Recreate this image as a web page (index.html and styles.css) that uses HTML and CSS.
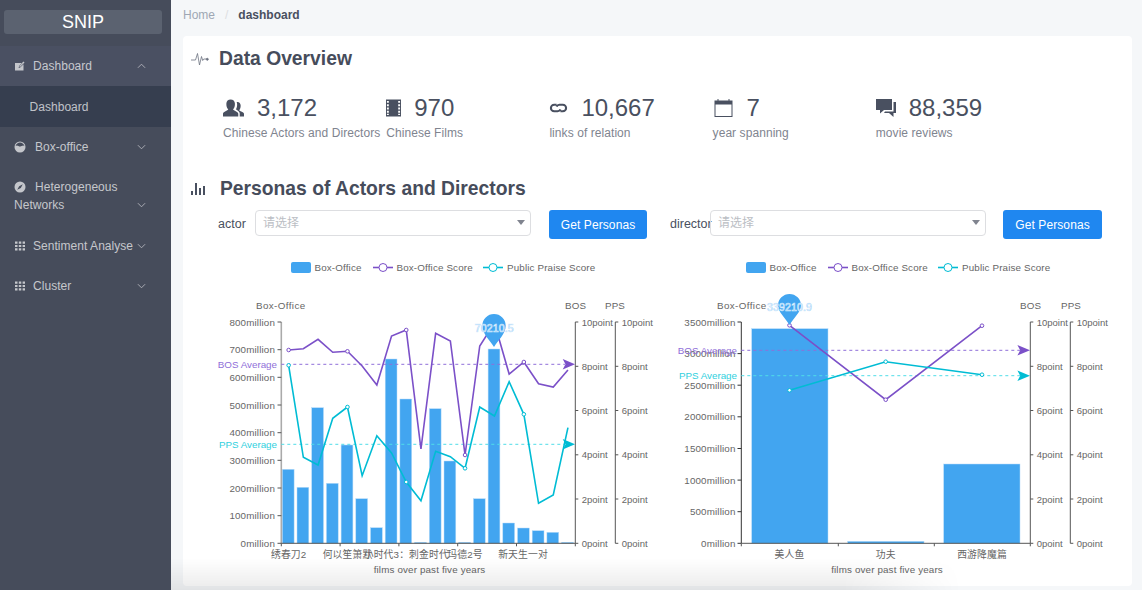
FILE: index.html
```html
<!DOCTYPE html>
<html lang="en">
<head>
    <meta charset="UTF-8">
    <meta name="viewport" content="width=device-width, initial-scale=1.0">
    <title>SNIP</title>
    <link rel="stylesheet" href="styles.css">
</head>
<body>
    <aside class="sidebar">
        <div class="logo">SNIP</div>
        <ul class="menu">
            <li class="menu-item open">
                <span class="menu-text"><svg class="menu-icon" viewBox="0 0 12 12"><path d="M1 3h7.500L5 6.500 4.600 8l1.600-.4L9.500 4.300V10.500H1zM6 7l4.500-4.500-1-1L5.200 5.800z"/></svg>Dashboard</span>
                <svg class="chevron" viewBox="0 0 10 6"><path d="M1 5l4-4 4 4"/></svg>
            </li>
            <li class="submenu-item">Dashboard</li>
            <li class="menu-item">
                <span class="menu-text text-wide"><svg class="menu-icon" viewBox="0 0 12 12"><circle cx="6" cy="6" r="5.500"/><path class="icon-cut" d="M1.500 5.200C3 3.300 4.500 5.300 6 5.500S9 3.500 10.500 5.200C9.800 2.800 8 1.500 6 1.500S2.200 2.800 1.500 5.200z"/></svg>Box-office</span>
                <svg class="chevron" viewBox="0 0 10 6"><path d="M1 1l4 4 4-4"/></svg>
            </li>
            <li class="menu-item tall">
                <span class="menu-text text-wide"><svg class="menu-icon" viewBox="0 0 12 12"><circle cx="6" cy="6" r="5.500"/><path class="icon-cut" d="M8.800 3.200L6.800 7 3.200 8.800 5.200 5.200z"/></svg>Heterogeneous Networks</span>
                <svg class="chevron" viewBox="0 0 10 6"><path d="M1 1l4 4 4-4"/></svg>
            </li>
            <li class="menu-item">
                <span class="menu-text"><svg class="menu-icon" viewBox="0 0 12 12"><path d="M1 1.500h2.500v2.200H1zM4.800 1.500h2.500v2.200H4.800zM8.600 1.500H11v2.200H8.600zM1 4.900h2.500v2.200H1zM4.800 4.900h2.500v2.200H4.800zM8.600 4.900H11v2.200H8.600zM1 8.300h2.500v2.200H1zM4.800 8.300h2.500v2.200H4.800zM8.600 8.300H11v2.200H8.600z"/></svg>Sentiment Analyse</span>
                <svg class="chevron" viewBox="0 0 10 6"><path d="M1 1l4 4 4-4"/></svg>
            </li>
            <li class="menu-item">
                <span class="menu-text"><svg class="menu-icon" viewBox="0 0 12 12"><path d="M1 1.500h2.500v2.200H1zM4.800 1.500h2.500v2.200H4.800zM8.600 1.500H11v2.200H8.600zM1 4.900h2.500v2.200H1zM4.800 4.900h2.500v2.200H4.800zM8.600 4.900H11v2.200H8.600zM1 8.300h2.500v2.200H1zM4.800 8.300h2.500v2.200H4.800zM8.600 8.300H11v2.200H8.600z"/></svg>Cluster</span>
                <svg class="chevron" viewBox="0 0 10 6"><path d="M1 1l4 4 4-4"/></svg>
            </li>
        </ul>
    </aside>

    <main class="content">
        <nav class="breadcrumb">
            <span>Home</span>
            <span class="crumb-sep">/</span>
            <strong>dashboard</strong>
        </nav>

        <section class="card">
            <h2 class="section-title">
                <svg class="title-icon" viewBox="0 0 18 14"><path d="M0 8h4.500L6.500 1.500 8.500 13l2-8.500L11.700 8.500l1-1.500h3"/><circle cx="16.300" cy="7.300" r="1"/></svg>
                Data Overview
            </h2>

            <div class="stats">
                <div class="stat">
                    <div class="stat-top">
                        <svg class="stat-icon" viewBox="0 0 22 18"><path d="M0 18v-3c0-2 4-3 5.500-4.500C4 9 3.500 7 3.500 4.500 3.500 1.500 5.500 0 8 0s4.500 1.500 4.500 4.500c0 2.500-.5 4.500-2 6C12 12 16 13 16 15v3zM17.500 18v-3.500c0-1.500-2-3-4-4.200 1-1.500 1.300-3.300 1.300-5.300 0-1-.2-1.700-.5-2.300C16.700 2.200 18.500 3.800 18.500 6.500c0 2-.5 3.700-1.500 5 1.500 1 5 1.800 5 3.500v3z"/></svg>
                        <span class="stat-value">3,172</span>
                    </div>
                    <div class="stat-label">Chinese Actors and Directors</div>
                </div>
                <div class="stat">
                    <div class="stat-top">
                        <svg class="stat-icon film" viewBox="0 0 16 18"><path fill-rule="evenodd" d="M0 0h16v18H0zM1 1.500v2h2v-2zM1 5v2h2V5zM1 8.500v2h2v-2zM1 12v2h2v-2zM1 15v1.500h2V15zM13 1.500v2h2v-2zM13 5v2h2V5zM13 8.500v2h2v-2zM13 12v2h2v-2zM13 15v1.500h2V15z"/></svg>
                        <span class="stat-value">970</span>
                    </div>
                    <div class="stat-label">Chinese Films</div>
                </div>
                <div class="stat">
                    <div class="stat-top">
                        <svg class="stat-icon link" viewBox="0 0 20 12"><path d="M8 2.500H5.500a3.500 3.500 0 0 0 0 7H9a3.500 3.500 0 0 0 3-2M12 9.500h2.500a3.500 3.500 0 0 0 0-7H11a3.500 3.500 0 0 0-3 2"/></svg>
                        <span class="stat-value">10,667</span>
                    </div>
                    <div class="stat-label">links of relation</div>
                </div>
                <div class="stat">
                    <div class="stat-top">
                        <svg class="stat-icon" viewBox="0 0 18 18"><path fill-rule="evenodd" d="M0 1.500h3V0h1v1.500h10V0h1v1.500h3V18H0zM1 5.500V17h16V5.500z"/></svg>
                        <span class="stat-value">7</span>
                    </div>
                    <div class="stat-label">year spanning</div>
                </div>
                <div class="stat">
                    <div class="stat-top">
                        <svg class="stat-icon chat" viewBox="0 0 20 18"><path d="M0 0h16v11H8l-4 3.500V11H0zM17.500 3H20v11h-2.500v4L13 14H8l1-1.500h8.500z"/></svg>
                        <span class="stat-value">88,359</span>
                    </div>
                    <div class="stat-label">movie reviews</div>
                </div>
            </div>

            <h2 class="section-title">
                <svg class="title-icon bars-icon" viewBox="0 0 14 12"><path d="M0 8h2v4H0zM4 0h2v12H4zM8 5h2v7H8zM12 3h2v9h-2z"/></svg>
                Personas of Actors and Directors
            </h2>

            <div class="filters">
                <div class="filter">
                    <label class="filter-label">actor</label>
                    <div class="select">请选择<i class="select-arrow"></i></div>
                    <button class="btn">Get Personas</button>
                </div>
                <div class="filter">
                    <label class="filter-label label-director">director</label>
                    <div class="select">请选择<i class="select-arrow"></i></div>
                    <button class="btn btn-director">Get Personas</button>
                </div>
            </div>

            <div class="charts">
                <svg class="chart" viewBox="208 252 455 330">
                    <rect class="swatch" x="291" y="262" width="20" height="11" rx="2"/>
                    <text x="314.500" y="271">Box-Office</text>
                    <path class="l-purple" d="M373 267.500h20"/><circle class="dot-purple legend-dot" cx="383" cy="267.500" r="4"/>
                    <text x="396.500" y="271">Box-Office Score</text>
                    <path class="l-teal" d="M483 267.500h20"/><circle class="dot-teal legend-dot" cx="493" cy="267.500" r="4"/>
                    <text x="507" y="271">Public Praise Score</text>

                    <text class="axis-name" x="256" y="308.500">Box-Office</text>
                    <text x="565" y="308.500">BOS</text>
                    <text x="605" y="308.500">PPS</text>

                    <g class="bars">
                        <rect x="282.300" y="469.300" width="11.800" height="74"/>
                        <rect x="297" y="487.300" width="11.800" height="56"/>
                        <rect x="311.700" y="407.700" width="11.800" height="135.600"/>
                        <rect x="326.400" y="483.300" width="11.800" height="60"/>
                        <rect x="341.100" y="445" width="11.800" height="98.300"/>
                        <rect x="355.800" y="498.700" width="11.800" height="44.600"/>
                        <rect x="370.500" y="527.700" width="11.800" height="15.600"/>
                        <rect x="385.200" y="359" width="11.800" height="184.300"/>
                        <rect x="399.900" y="399" width="11.800" height="144.300"/>
                        <rect x="414.600" y="542.300" width="11.800" height="1"/>
                        <rect x="429.300" y="408.700" width="11.800" height="134.600"/>
                        <rect x="444" y="461" width="11.800" height="82.300"/>
                        <rect x="458.700" y="542.300" width="11.800" height="1"/>
                        <rect x="473.400" y="498.700" width="11.800" height="44.600"/>
                        <rect x="488.100" y="349" width="11.800" height="194.300"/>
                        <rect x="502.800" y="523" width="11.800" height="20.300"/>
                        <rect x="517.500" y="528" width="11.800" height="15.300"/>
                        <rect x="532.200" y="530.700" width="11.800" height="12.600"/>
                        <rect x="546.900" y="532.300" width="11.800" height="11"/>
                        <rect x="561.600" y="542.300" width="11.800" height="1"/>
                    </g>

                    <path class="axis axis-light" d="M281.300 322v221.300"/>
                    <path class="axis" d="M277.500 322h3.800M277.500 349.700h3.800M277.500 377.300h3.800M277.500 405h3.800M277.500 432.700h3.800M277.500 460.300h3.800M277.500 488h3.800M277.500 515.700h3.800M277.500 543.300h3.800"/>
                    <path class="axis" d="M281.300 543.300H575.300M281.300 543.300v3M340.100 543.300v3M398.900 543.300v3M457.700 543.300v3M516.500 543.300v3M575.300 543.300v3"/>
                    <path class="axis" d="M575.300 322v221.300M575.300 322h3M575.300 366.300h3M575.300 410.500h3M575.300 454.800h3M575.300 499h3M575.300 543.300h3"/>
                    <path class="axis" d="M615.300 322v221.300M615.300 322h3M615.300 366.300h3M615.300 410.500h3M615.300 454.800h3M615.300 499h3M615.300 543.300h3"/>

                    <g text-anchor="end">
                        <text x="275" y="325.500">800million</text>
                        <text x="275" y="353.200">700million</text>
                        <text x="275" y="380.800">600million</text>
                        <text x="275" y="408.500">500million</text>
                        <text x="275" y="436.200">400million</text>
                        <text x="275" y="463.800">300million</text>
                        <text x="275" y="491.500">200million</text>
                        <text x="275" y="519.200">100million</text>
                        <text x="275" y="546.800">0million</text>
                    </g>
                    <g class="point-labels">
                        <text x="581.700" y="325.500">10point</text><text x="581.700" y="369.800">8point</text><text x="581.700" y="414">6point</text><text x="581.700" y="458.300">4point</text><text x="581.700" y="502.500">2point</text><text x="581.700" y="546.800">0point</text>
                        <text x="621.700" y="325.500">10point</text><text x="621.700" y="369.800">8point</text><text x="621.700" y="414">6point</text><text x="621.700" y="458.300">4point</text><text x="621.700" y="502.500">2point</text><text x="621.700" y="546.800">0point</text>
                    </g>

                    <g text-anchor="middle">
                        <text x="288.700" y="557.500">绣春刀2</text>
                        <text x="347.500" y="557.500">何以笙箫默</text>
                        <text x="406.300" y="557.500">小时代3：刺金时代</text>
                        <text x="465" y="557.500">玛德2号</text>
                        <text x="523" y="557.500">新天生一对</text>
                        <text x="429.500" y="572.500">films over past five years</text>
                    </g>

                    <path class="dash-purple" d="M281.300 364.300H565"/>
                    <path class="arrow-purple" d="M575 364.300L562.700 359 565.500 364.300 562.700 369.600z"/>
                    <path class="dash-teal" d="M281.300 444.300H565"/>
                    <path class="arrow-teal" d="M575 444.300L562.700 439 565.500 444.300 562.700 449.600z"/>
                    <text class="t-purple" x="277" y="368" text-anchor="end">BOS Average</text>
                    <text class="t-teal" x="277" y="448" text-anchor="end">PPS Average</text>

                    <polyline class="l-purple" points="288.650,350 303.350,348.700 318.050,339.300 332.750,352.300 347.450,351.300 362.150,366 376.850,385 391.550,336 406.250,330 420.950,449 435.650,333.300 450.350,341 465.050,455 479.750,346 494.450,323 509.150,374 523.850,362 538.550,383.700 553.250,387 567.950,370"/>
                    <polyline class="l-teal" points="288.650,365.300 303.350,457.300 318.050,465 332.750,418.300 347.450,407 362.150,475.700 376.850,435.700 391.550,453 406.250,482 420.950,500.700 435.650,451.300 450.350,456.700 465.050,468.300 479.750,407 494.450,416 509.150,381.700 523.850,414.300 538.550,503.300 553.250,495 567.950,427.700"/>
                    <g class="dot-purple">
                        <circle cx="288.650" cy="350" r="1.800"/><circle cx="347.450" cy="351.300" r="1.800"/><circle cx="406.250" cy="330" r="1.800"/><circle cx="465.050" cy="455" r="1.800"/><circle cx="523.850" cy="362" r="1.800"/>
                    </g>
                    <g class="dot-teal">
                        <circle cx="288.650" cy="365.300" r="1.800"/><circle cx="347.450" cy="407" r="1.800"/><circle cx="406.250" cy="482" r="1.800"/><circle cx="465.050" cy="468.300" r="1.800"/><circle cx="523.850" cy="414.300" r="1.800"/>
                    </g>

                    <path class="pin" d="M494 347C490 340 482.300 334 482.300 325.700A11.700 11.700 0 1 1 505.700 325.700C505.700 334 498 340 494 347z"/>
                    <text class="pin-text" x="494.300" y="331.500" text-anchor="middle">70210.5</text>
                </svg>

                <svg class="chart" viewBox="663 252 455 330">
                    <rect class="swatch" x="746" y="262" width="20" height="11" rx="2"/>
                    <text x="769.500" y="271">Box-Office</text>
                    <path class="l-purple" d="M828 267.500h20"/><circle class="dot-purple legend-dot" cx="838" cy="267.500" r="4"/>
                    <text x="851.500" y="271">Box-Office Score</text>
                    <path class="l-teal" d="M938 267.500h20"/><circle class="dot-teal legend-dot" cx="948" cy="267.500" r="4"/>
                    <text x="962" y="271">Public Praise Score</text>

                    <text class="axis-name" x="717" y="308.500">Box-Office</text>
                    <text x="1020" y="308.500">BOS</text>
                    <text x="1061" y="308.500">PPS</text>

                    <g class="bars">
                        <rect x="751.700" y="328.700" width="76.300" height="214.600"/>
                        <rect x="847.700" y="541.300" width="76.300" height="2"/>
                        <rect x="943.700" y="464" width="76.300" height="79.300"/>
                    </g>

                    <path class="axis axis-dark" d="M741.300 322v221.300M737.500 322h3.800M737.500 353.600h3.800M737.500 385.200h3.800M737.500 416.800h3.800M737.500 448.500h3.800M737.500 480.100h3.800M737.500 511.700h3.800M737.500 543.300h3.800"/>
                    <path class="axis" d="M741.300 543.300H1030.300M741.300 543.300v3M838.300 543.300v3M934.300 543.300v3M1030.300 543.300v3"/>
                    <path class="axis" d="M1030.300 322v221.300M1030.300 322h3M1030.300 366.300h3M1030.300 410.500h3M1030.300 454.800h3M1030.300 499h3M1030.300 543.300h3"/>
                    <path class="axis" d="M1070.300 322v221.300M1070.300 322h3M1070.300 366.300h3M1070.300 410.500h3M1070.300 454.800h3M1070.300 499h3M1070.300 543.300h3"/>

                    <g text-anchor="end">
                        <text x="735.500" y="325.500">3500million</text>
                        <text x="735.500" y="357.100">3000million</text>
                        <text x="735.500" y="388.700">2500million</text>
                        <text x="735.500" y="420.300">2000million</text>
                        <text x="735.500" y="452">1500million</text>
                        <text x="735.500" y="483.600">1000million</text>
                        <text x="735.500" y="515.200">500million</text>
                        <text x="735.500" y="546.800">0million</text>
                    </g>
                    <g class="point-labels">
                        <text x="1036.700" y="325.500">10point</text><text x="1036.700" y="369.800">8point</text><text x="1036.700" y="414">6point</text><text x="1036.700" y="458.300">4point</text><text x="1036.700" y="502.500">2point</text><text x="1036.700" y="546.800">0point</text>
                        <text x="1076.700" y="325.500">10point</text><text x="1076.700" y="369.800">8point</text><text x="1076.700" y="414">6point</text><text x="1076.700" y="458.300">4point</text><text x="1076.700" y="502.500">2point</text><text x="1076.700" y="546.800">0point</text>
                    </g>

                    <g text-anchor="middle">
                        <text x="789.500" y="557.500">美人鱼</text>
                        <text x="885.700" y="557.500">功夫</text>
                        <text x="982" y="557.500">西游降魔篇</text>
                        <text x="887" y="572.500">films over past five years</text>
                    </g>

                    <path class="dash-purple" d="M741.300 350.300H1020"/>
                    <path class="arrow-purple" d="M1030 350.300L1017.400 345 1020.200 350.300 1017.400 355.600z"/>
                    <path class="dash-teal" d="M741.300 375.700H1020"/>
                    <path class="arrow-teal" d="M1030 375.700L1017.400 370.400 1020.200 375.700 1017.400 381z"/>
                    <text class="t-purple" x="737" y="354" text-anchor="end">BOS Average</text>
                    <text class="t-teal" x="737" y="379.400" text-anchor="end">PPS Average</text>

                    <polyline class="l-purple" points="789.500,325.300 885.700,399.700 982,325.700"/>
                    <polyline class="l-teal" points="789.500,390.300 885.700,361.700 982,374.700"/>
                    <g class="dot-purple">
                        <circle cx="789.500" cy="325.300" r="1.800"/><circle cx="885.700" cy="399.700" r="1.800"/><circle cx="982" cy="325.700" r="1.800"/>
                    </g>
                    <g class="dot-teal">
                        <circle cx="789.500" cy="390.300" r="1.800"/><circle cx="885.700" cy="361.700" r="1.800"/><circle cx="982" cy="374.700" r="1.800"/>
                    </g>

                    <path class="pin" d="M789.500 325C785.500 318 778 312 778 305.500A11.500 11.500 0 1 1 801 305.500C801 312 793.500 318 789.500 325z"/>
                    <text class="pin-text" x="789.500" y="310.500" text-anchor="middle">339210.9</text>
                </svg>
            </div>
        </section>
        <div class="bottom-shade"></div>
    </main>
</body>
</html>
```

FILE: styles.css
```css
* {
    box-sizing: border-box;
}
html, body {
    height: 100%;
}
body {
    display: flex;
    margin: 0;
    overflow: hidden;
    background-color: #f5f7f9;
    font-family: "Liberation Sans", "Noto Sans CJK SC", sans-serif;
    font-size: 12px;
    color: #495060;
}

/* sidebar */
.sidebar {
    flex: 0 0 171px;
    background-color: #464c5b;
}
.logo {
    width: 158px;
    height: 24px;
    margin: 10px 0 12px 4px;
    background-color: #5b6270;
    border-radius: 3px;
    color: #fff;
    font-size: 18px;
    line-height: 25px;
    text-align: center;
}
.menu {
    list-style: none;
    margin: 0;
    padding: 0;
}
.menu-item {
    display: flex;
    justify-content: space-between;
    align-items: flex-end;
    padding: 11px 25px 11px 14px;
    color: rgba(255, 255, 255, 0.7);
    line-height: 18px;
}
.menu-item.open {
    background-color: #4a5062;
}
.menu-item.tall {
    padding-bottom: 12px;
}
.menu-text {
    width: 123px;
    letter-spacing: 0.04px;
}
.menu-icon {
    width: 12px;
    height: 12px;
    margin-right: 7px;
    vertical-align: -2px;
    fill: #c4c6cb;
}
.text-wide .menu-icon {
    margin-right: 9px;
}
.icon-cut {
    fill: #464c5b;
}
.chevron {
    flex: none;
    width: 9px;
    height: 6px;
    margin-bottom: 6px;
    fill: none;
    stroke: #b4b6bd;
    stroke-width: 1;
}
.submenu-item {
    height: 41px;
    padding-left: 29.500px;
    background-color: #363e4f;
    color: rgba(255, 255, 255, 0.7);
    line-height: 42px;
    letter-spacing: 0.04px;
}

/* main area */
.content {
    position: relative;
    flex: 1;
    padding: 0 10px 0 12px;
    min-width: 0;
}
.breadcrumb {
    display: flex;
    align-items: center;
    height: 36px;
    padding-bottom: 6px;
    color: #9ea7b4;
}
.breadcrumb strong {
    color: #495060;
}
.crumb-sep {
    margin: 0 10px;
    color: #dddee1;
}
.card {
    height: 550px;
    padding: 11px 8px 0;
    background-color: #fff;
    border-radius: 4px;
}
.section-title {
    display: flex;
    align-items: center;
    height: 24px;
    margin: 0;
    font-size: 19.300px;
    font-weight: bold;
    color: #464c5b;
}
.title-icon {
    width: 18px;
    height: 14px;
    margin-right: 10px;
    fill: none;
    stroke: #6c7280;
    stroke-width: 0.800;
}
.title-icon circle {
    fill: #6c7280;
}
.bars-icon {
    width: 14px;
    height: 12px;
    margin-right: 15px;
    fill: #495060;
    stroke: none;
}

/* stats */
.stats {
    display: grid;
    grid-template-columns: repeat(5, 163.200px);
    height: 106px;
    padding: 24px 0 0 32px;
}
.stat-top {
    display: flex;
    align-items: center;
    height: 26px;
}
.stat-icon {
    width: 21px;
    height: 18px;
    margin-right: 13px;
    fill: #495060;
}
.stat-icon.film {
    width: 15px;
}
.stat-icon.link {
    width: 19px;
    fill: none;
    stroke: #495060;
    stroke-width: 2.200;
}
.stat-icon.chat {
    width: 20px;
}
.stat-value {
    font-size: 24px;
    color: #495060;
}
.stat-label {
    margin-top: 5px;
    color: #80848f;
    letter-spacing: 0.07px;
    white-space: nowrap;
}

/* filters */
.filters {
    display: grid;
    grid-template-columns: 452px 440px;
    margin-top: 9px;
    padding-left: 27px;
}
.filter {
    display: flex;
    align-items: flex-start;
}
.filter-label {
    width: 37px;
    font-size: 12.500px;
    line-height: 28px;
}
.label-director {
    width: 40px;
}
.select {
    position: relative;
    width: 276px;
    height: 26px;
    padding-left: 7px;
    border: 1px solid #dddee1;
    border-radius: 4px;
    color: #bbbec4;
    line-height: 24px;
}
.select-arrow {
    position: absolute;
    right: 5px;
    top: 9px;
    border-left: 4.500px solid transparent;
    border-right: 4.500px solid transparent;
    border-top: 5px solid #80848f;
}
.btn {
    width: 98px;
    height: 29px;
    margin-left: 18px;
    padding: 0;
    border: none;
    border-radius: 3px;
    background-color: #1f87f0;
    color: #fff;
    font-family: inherit;
    font-size: 12px;
    letter-spacing: 0.1px;
}
.btn-director {
    width: 99px;
    margin-left: 17px;
}

/* charts */
.charts {
    display: flex;
    margin: 13px 0 0 17px;
}
.chart {
    flex: none;
    width: 455px;
    height: 330px;
    font-size: 9.800px;
    fill: #666;
    letter-spacing: 0.15px;
}
.axis-name {
    letter-spacing: 0.4px;
}
.point-labels {
    font-size: 9.500px;
    letter-spacing: 0;
}
.swatch {
    fill: #42a5f0;
}
.bars rect {
    fill: #42a5f0;
    stroke: #b7dcf9;
    stroke-width: 0.500;
}
.axis {
    fill: none;
    stroke: #555;
    stroke-width: 1;
}
.axis-light {
    stroke: #aaa;
    stroke-width: 1.600;
}
.axis-dark {
    stroke: #333;
}
.l-purple, .l-teal {
    fill: none;
    stroke-width: 1.600;
}
.l-purple {
    stroke: #7b50c8;
}
.l-teal {
    stroke: #00bcd4;
}
.dot-purple, .dot-teal {
    fill: #fff;
    stroke-width: 1;
}
.dot-purple {
    stroke: #7b50c8;
}
.dot-teal {
    stroke: #00bcd4;
}
.dash-purple, .dash-teal {
    fill: none;
    stroke-width: 1;
    stroke-dasharray: 3 3;
}
.dash-purple {
    stroke: #8f6fd9;
}
.dash-teal {
    stroke: #4fdde8;
}
.arrow-purple {
    fill: #7b50c8;
}
.arrow-teal {
    fill: #00bcd4;
}
.t-purple {
    fill: #8f6fd9;
    letter-spacing: 0;
}
.t-teal {
    fill: #2fd0de;
    letter-spacing: 0;
}
.pin {
    fill: #42a5f0;
}
.pin-text {
    fill: #42a5f0;
    stroke: #d8ecfd;
    stroke-width: 0.700;
    font-size: 10.500px;
}

/* soft shadow along the bottom edge of the page */
.bottom-shade {
    position: absolute;
    left: 0;
    bottom: 0;
    width: 790px;
    height: 32px;
    background: linear-gradient(to top, rgba(0, 0, 0, 0.08), rgba(0, 0, 0, 0));
    -webkit-mask-image: linear-gradient(to right, #000 85%, transparent);
    mask-image: linear-gradient(to right, #000 85%, transparent);
}
```
